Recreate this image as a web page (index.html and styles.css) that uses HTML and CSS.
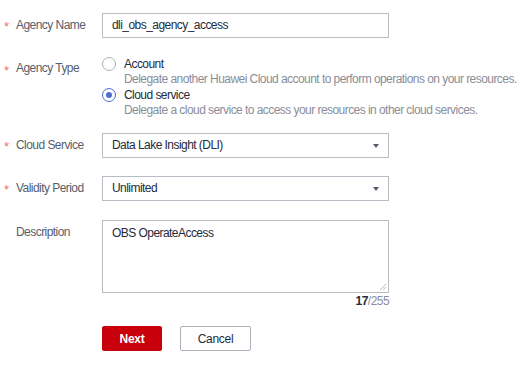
FILE: index.html
```
<!DOCTYPE html>
<html lang="en">
<head>
    <meta charset="UTF-8">
    <title>Create Agency</title>
    <link rel="stylesheet" href="styles.css">
</head>
<body>
<form class="agency-form">
    <div class="row">
        <label class="label required">Agency Name</label>
        <div class="field">
            <div class="input">dli_obs_agency_access</div>
        </div>
    </div>

    <div class="row row-type">
        <label class="label required">Agency Type</label>
        <div class="field radios">
            <div class="radio">
                <span class="circle"></span>
                <span class="radio-text">Account</span>
            </div>
            <div class="hint">Delegate another Huawei Cloud account to perform operations on your resources.</div>
            <div class="radio">
                <span class="circle checked"></span>
                <span class="radio-text">Cloud service</span>
            </div>
            <div class="hint">Delegate a cloud service to access your resources in other cloud services.</div>
        </div>
    </div>

    <div class="row">
        <label class="label required">Cloud Service</label>
        <div class="field">
            <div class="input select">Data Lake Insight (DLI)<span class="arrow"></span></div>
        </div>
    </div>

    <div class="row row-validity">
        <label class="label required">Validity Period</label>
        <div class="field">
            <div class="input select">Unlimited<span class="arrow"></span></div>
        </div>
    </div>

    <div class="row row-desc">
        <label class="label">Description</label>
        <div class="field">
            <div class="textarea">OBS OperateAccess
                <svg class="grip" width="7" height="7" viewBox="0 0 7 7">
                    <path d="M1 7L7 1M4 7L7 4" stroke="#b8bcc4" stroke-width="1"/>
                </svg>
            </div>
            <div class="counter"><b>17</b>/255</div>
        </div>
    </div>

    <div class="actions">
        <button type="button" class="btn btn-primary">Next</button>
        <button type="button" class="btn btn-default">Cancel</button>
    </div>
</form>
</body>
</html>
```

FILE: styles.css
```
body {
    margin: 0;
    padding: 0;
    background: #fff;
    font-family: "Liberation Sans", Arial, sans-serif;
    font-size: 12px;
    letter-spacing: -0.55px;
    color: #252b3a;
}

.agency-form {
    padding: 13px 0 0 0;
    width: 519px;
}

.row {
    display: flex;
    margin-bottom: 18px;
}

.label {
    width: 102px;
    flex-shrink: 0;
    box-sizing: border-box;
    padding-left: 16px;
    line-height: 25px;
    color: #575d6c;
    position: relative;
}

.label.required::before {
    content: "*";
    position: absolute;
    left: 4px;
    top: 1px;
    line-height: 25px;
    color: #f66f6a;
    font-size: 13px;
}

.row-type .label.required::before {
    top: 0;
    line-height: 30px;
}

.field {
    width: 287px;
}

.input {
    height: 25px;
    box-sizing: border-box;
    border: 1px solid #b8bcc4;
    padding: 0 9px;
    line-height: 23px;
    color: #252b3a;
    position: relative;
}

.arrow {
    position: absolute;
    right: 9px;
    top: 10px;
    width: 0;
    height: 0;
    border-left: 3px solid transparent;
    border-right: 3px solid transparent;
    border-top: 4px solid #575d6c;
}

.row-type {
    margin-top: 1px;
    margin-bottom: 15px;
}

.row-type .label {
    line-height: 16px;
    padding-top: 4px;
}

.row-validity {
    margin-bottom: 19px;
}

.radios {
    width: 417px;
}

.radio {
    display: flex;
    align-items: center;
    height: 16px;
}

.circle {
    width: 12px;
    height: 12px;
    border: 1px solid #adb0b8;
    border-radius: 50%;
    margin-right: 8px;
    position: relative;
    flex-shrink: 0;
}

.circle.checked {
    border-color: #526ecc;
}

.circle.checked::after {
    content: "";
    position: absolute;
    left: 3px;
    top: 3px;
    width: 6px;
    height: 6px;
    border-radius: 50%;
    background: #526ecc;
}

.hint {
    padding-left: 22px;
    line-height: 15px;
    color: #8a8e99;
    white-space: nowrap;
}

.textarea {
    height: 73px;
    box-sizing: border-box;
    border: 1px solid #b8bcc4;
    padding: 5px 9px;
    line-height: 14px;
    position: relative;
}

.grip {
    position: absolute;
    right: 2px;
    bottom: 2px;
}

.counter {
    text-align: right;
    color: #8a8e99;
    margin-top: 1px;
    line-height: 14px;
}

.counter b {
    color: #252b3a;
    font-weight: bold;
}

.actions {
    display: flex;
    gap: 18px;
    padding-left: 102px;
    margin-top: 2px;
}

.btn {
    height: 25px;
    font-family: "Liberation Sans", Arial, sans-serif;
    font-size: 12px;
    letter-spacing: -0.3px;
    border-radius: 2px;
    padding: 0;
    box-sizing: border-box;
}

.btn-primary {
    width: 60px;
    background: #c7000b;
    border: 1px solid #c7000b;
    color: #fff;
    font-weight: bold;
}

.btn-default {
    width: 71px;
    background: #fff;
    border: 1px solid #adb0b8;
    color: #252b3a;
}
```
